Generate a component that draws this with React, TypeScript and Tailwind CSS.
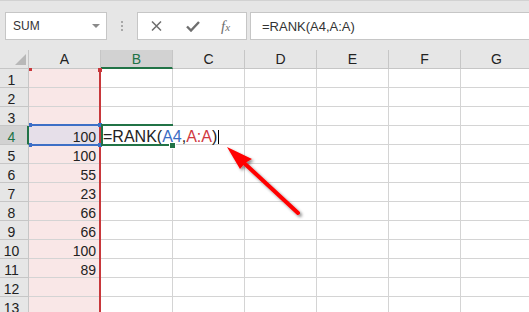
import React from "react";

const cols = ["A", "B", "C", "D", "E", "F", "G"];
const data: Record<number, number> = { 4: 100, 5: 100, 6: 55, 7: 23, 8: 66, 9: 66, 10: 100, 11: 89 };
const rows = Array.from({ length: 13 }, (_, i) => i + 1);

export default function App() {
  return (
    <div className="relative w-[529px] h-[312px] overflow-hidden bg-white font-['Liberation_Sans',Arial,sans-serif]">
      {/* toolbar */}
      <div className="h-[50px] bg-[#e6e6e6] border-t border-[#d2d2d2] flex items-start pt-[11px] overflow-hidden">
        <div className="shrink-0 ml-[5px] w-[102px] h-[28px] bg-white border border-[#c6c6c6] flex items-center pl-[7px] pr-[6px]">
          <span className="text-[12px] text-[#333] flex-1 leading-none">SUM</span>
          <svg width="8" height="4" viewBox="0 0 8 4"><path d="M0 0H8L4 4Z" fill="#8a8a8a" /></svg>
        </div>
        <div className="shrink-0 ml-[14px] mt-[9px] flex flex-col gap-[2px]">
          <div className="w-[2px] h-[2px] bg-[#a8a8a8]" />
          <div className="w-[2px] h-[2px] bg-[#a8a8a8]" />
          <div className="w-[2px] h-[2px] bg-[#a8a8a8]" />
        </div>
        <div className="shrink-0 ml-[14px] w-[110px] h-[28px] bg-white border border-[#c6c6c6] flex items-center">
          <div className="ml-[13px]">
            <svg width="11" height="10" viewBox="0 0 11 10" className="block"><path d="M1 0.5L10 9.5M10 0.5L1 9.5" stroke="#6e6e6e" strokeWidth="1.5" /></svg>
          </div>
          <div className="ml-[24px]">
            <svg width="14" height="11" viewBox="0 0 14 11" className="block"><path d="M1 5.5L5 9.5L13 1" stroke="#6e6e6e" strokeWidth="2.4" fill="none" /></svg>
          </div>
          <div className="ml-[21px] font-['Liberation_Serif',serif] italic text-[#6e6e6e] text-[15px] leading-none">
            f<span className="text-[11px]">x</span>
          </div>
        </div>
        <div className="shrink-0 ml-[3px] w-[300px] h-[28px] bg-white border border-[#c6c6c6] flex items-center pl-[11px]">
          <span className="text-[13px] text-[#333] leading-none">=RANK(A4,A:A)</span>
        </div>
      </div>

      {/* grid */}
      <div className="flex flex-col">
        <div className="flex h-[19px]">
          <div className="relative w-[29px] shrink-0 bg-[#e6e6e6] border-r border-b border-[#c6c6c6]">
            <svg width="11" height="11" viewBox="0 0 11 11" className="absolute left-[15px] top-[4px]"><path d="M11 0V11H0Z" fill="#b8b8b8" /></svg>
          </div>
          {cols.map((c) => (
            <div
              key={c}
              className={
                c === "B"
                  ? "w-[72px] shrink-0 bg-[#d2d2d2] border-r border-[#c6c6c6] border-b-2 border-b-[#217346] flex items-end justify-center text-[14px] leading-[14px] text-[#217346] pb-[1px]"
                  : "w-[72px] shrink-0 bg-[#e6e6e6] border-r border-b border-[#c6c6c6] flex items-end justify-center text-[14px] leading-[14px] text-[#222] pb-[2px]"
              }
            >
              {c}
            </div>
          ))}
        </div>
        {rows.map((r) => (
          <div key={r} className="flex h-[19px]">
            <div
              className={
                r === 4
                  ? "w-[29px] shrink-0 bg-[#d2d2d2] border-r-2 border-r-[#217346] border-b border-b-[#c6c6c6] flex items-end justify-center pr-[4px] text-[14px] leading-[14px] text-[#217346]"
                  : "w-[29px] shrink-0 bg-[#e6e6e6] border-r border-b border-[#c6c6c6] flex items-end justify-center pr-[5px] text-[14px] leading-[14px] text-[#222]"
              }
            >
              {r}
            </div>
            {cols.map((c) => (
              <div
                key={c}
                className={
                  c === "A"
                    ? r === 4
                      ? "w-[72px] shrink-0 bg-[#e6dfe9] border-r border-b border-[#d4d4d4] flex items-end justify-end pr-[4px] text-[14px] leading-[14px] text-[#222]"
                      : "w-[72px] shrink-0 bg-[#f9e7e7] border-r border-b border-[#d4d4d4] flex items-end justify-end pr-[4px] text-[14px] leading-[14px] text-[#222]"
                    : "w-[72px] shrink-0 bg-white border-r border-b border-[#d4d4d4]"
                }
              >
                {c === "A" && data[r] !== undefined ? data[r] : null}
              </div>
            ))}
          </div>
        ))}
      </div>

      {/* range A:A highlight */}
      <div className="absolute left-[99px] top-[68px] w-[2px] h-[250px] bg-[#c8373b]" />
      <div className="absolute left-[29px] top-[68px] w-[3px] h-[3px] bg-[#c8373b]" />
      <div className="absolute left-[98px] top-[68px] w-[4px] h-[4px] bg-[#c8373b]" />

      {/* A4 highlight */}
      <div className="absolute left-[29px] top-[124px] w-[72px] h-[2px] bg-[#3d6fc6]" />
      <div className="absolute left-[29px] top-[144px] w-[72px] h-[2px] bg-[#3d6fc6]" />
      <div className="absolute left-[29px] top-[123px] w-[3px] h-[4px] bg-[#3d6fc6]" />
      <div className="absolute left-[98px] top-[123px] w-[4px] h-[4px] bg-[#3d6fc6]" />
      <div className="absolute left-[29px] top-[143px] w-[3px] h-[4px] bg-[#3d6fc6]" />
      <div className="absolute left-[98px] top-[143px] w-[4px] h-[4px] bg-[#3d6fc6]" />

      {/* B4 editor */}
      <div className="absolute left-[103px] top-[126px] w-[118px] h-[18px] bg-white flex items-start pt-[3px]">
        <span className="text-[16px] leading-[16px] text-[#222] whitespace-nowrap">
          =RANK(<span className="text-[#3a6cc4]">A4</span>,<span className="text-[#d0393f]">A:A</span>)
        </span>
        <div className="ml-[1px] mt-[1px] w-[1px] h-[14px] bg-black" />
      </div>
      <div className="absolute left-[101px] top-[124px] w-[72px] h-[2px] bg-[#217346]" />
      <div className="absolute left-[101px] top-[144px] w-[70px] h-[2px] bg-[#217346]" />
      <div className="absolute left-[101px] top-[124px] w-[2px] h-[22px] bg-[#217346]" />
      <div className="absolute left-[170px] top-[143px] w-[5px] h-[5px] bg-[#217346] border border-white box-content -ml-[1px] -mt-[1px]" />

      {/* red arrow */}
      <svg className="absolute left-[205px] top-[125px]" width="120" height="110" viewBox="-10 -10 120 110">
        <defs>
          <filter id="sh" x="-20%" y="-20%" width="140%" height="140%">
            <feDropShadow dx="2" dy="2" stdDeviation="1.6" floodColor="#000" floodOpacity="0.45" />
          </filter>
        </defs>
        <g filter="url(#sh)">
          <path d="M83 78L28 27" stroke="#ff0000" strokeWidth="4" strokeLinecap="round" />
          <path d="M12 12L37 24L30 28L25 34Z" fill="#ff0000" />
        </g>
      </svg>
    </div>
  );
}
